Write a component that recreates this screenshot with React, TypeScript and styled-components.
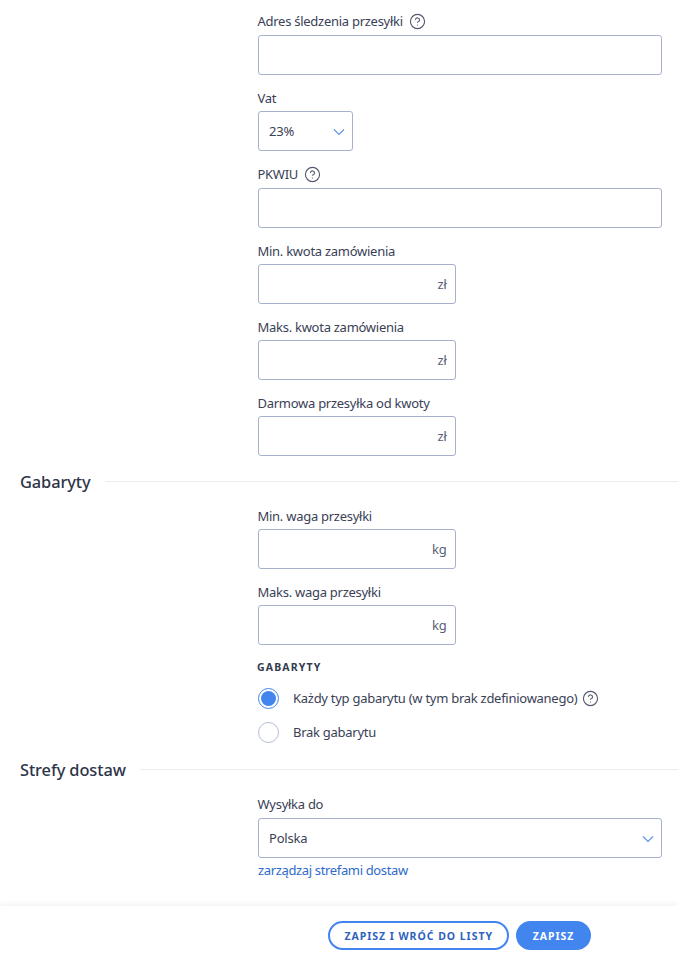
import React from 'react';
import styled, { createGlobalStyle } from 'styled-components';
import { CircleHelp } from 'lucide-react';

const GlobalStyle = createGlobalStyle`
  html, body {
    margin: 0;
    padding: 0;
    background: #ffffff;
    font-family: "Noto Sans", "Open Sans", sans-serif;
    color: #323a4f;
  }
  * {
    box-sizing: border-box;
  }
`;

const Page = styled.div`
  width: 678px;
  height: 961px;
  display: flex;
  flex-direction: column;
  overflow: hidden;
`;

const Content = styled.div`
  flex: 1;
  padding-top: 10px;
`;

const FormColumn = styled.div`
  margin-left: 258px;
  width: 404px;
`;

const Field = styled.div`
  margin-bottom: 12px;
`;

const Label = styled.label<{ $tall?: boolean }>`
  display: flex;
  align-items: center;
  gap: 6px;
  height: ${({ $tall }) => ($tall ? '25px' : '24px')};
  padding-bottom: ${({ $tall }) => ($tall ? '3px' : '2px')};
  margin-left: -0.5px;
  font-size: 13px;
  letter-spacing: -0.27px;
  color: #3a4156;
`;

const HelpIcon = styled(CircleHelp)`
  width: 17px;
  height: 17px;
  color: #56586f;
  flex-shrink: 0;
`;

const InputBox = styled.div<{ $width: number }>`
  position: relative;
  width: ${({ $width }) => $width}px;
  height: 40px;
`;

const TextInput = styled.input`
  display: block;
  width: 100%;
  height: 100%;
  padding: 0 40px 0 10px;
  border: 1px solid #a6b1cc;
  border-radius: 3px;
  background: #ffffff;
  outline: none;
  font: inherit;
`;

const Unit = styled.span`
  position: absolute;
  right: 9.5px;
  top: 11px;
  font-size: 13px;
  letter-spacing: -0.27px;
  color: #5a6075;
`;

const SelectControl = styled.select`
  display: block;
  width: 100%;
  height: 100%;
  padding: 0 30px 0 10px;
  border: 1px solid #a6b1cc;
  border-radius: 3px;
  background: #ffffff;
  appearance: none;
  outline: none;
  font-family: inherit;
  font-size: 13px;
  letter-spacing: -0.2px;
  color: #3a4156;
`;

const Chevron = styled.svg`
  position: absolute;
  right: 8px;
  top: 17px;
  width: 12px;
  height: 8px;
  fill: none;
  stroke: #5b93ea;
  stroke-width: 1.1;
  pointer-events: none;
`;

const SectionHeader = styled.div<{ $top: number; $bottom: number }>`
  display: flex;
  align-items: center;
  gap: 14px;
  height: 28px;
  margin-top: ${({ $top }) => $top}px;
  margin-bottom: ${({ $bottom }) => $bottom}px;
  padding-left: 20px;
`;

const SectionTitle = styled.h2`
  margin: 0;
  padding-bottom: 2px;
  font-size: 16.4px;
  font-weight: 500;
  letter-spacing: -0.1px;
  color: #2d3448;
  white-space: nowrap;
`;

const SectionLine = styled.div`
  flex: 1;
  height: 1px;
  margin-top: -2px;
  background: #ececec;
`;

const GroupTitle = styled.div`
  height: 18px;
  margin-bottom: 6px;
  margin-left: -1px;
  font-size: 10.5px;
  line-height: 20px;
  font-weight: 700;
  letter-spacing: 1.15px;
  color: #333a4e;
`;

const RadioRow = styled.label`
  display: flex;
  align-items: center;
  height: 34px;
  font-size: 13px;
  letter-spacing: -0.27px;
  color: #3a4156;
`;

const RadioMark = styled.span<{ $checked?: boolean }>`
  display: flex;
  align-items: center;
  justify-content: center;
  width: 21px;
  height: 21px;
  margin-right: 14px;
  border-radius: 50%;
  border: 1px solid ${({ $checked }) => ($checked ? '#4285ee' : '#b4bcd4')};
  &::after {
    content: '';
    display: ${({ $checked }) => ($checked ? 'block' : 'none')};
    width: 15px;
    height: 15px;
    border-radius: 50%;
    background: #4285ee;
  }
`;

const RadioHelp = styled(HelpIcon)`
  margin-left: 5px;
`;

const ManageLink = styled.a`
  display: block;
  margin-top: 3px;
  font-size: 13px;
  line-height: 18px;
  letter-spacing: -0.35px;
  color: #2f6bc9;
  text-decoration: none;
`;

const Footer = styled.div`
  flex-shrink: 0;
  height: 55px;
  display: flex;
  justify-content: flex-end;
  align-items: flex-start;
  gap: 7px;
  padding: 15px 87px 0 0;
  background: #ffffff;
  box-shadow: 0 -2px 5px rgba(0, 0, 0, 0.06);
`;

const Button = styled.button<{ $primary?: boolean }>`
  height: 29px;
  min-width: 75px;
  padding: 0 14px;
  border: 2px solid #4285ee;
  border-radius: 15px;
  background: ${({ $primary }) => ($primary ? '#4285ee' : '#ffffff')};
  color: ${({ $primary }) => ($primary ? '#ffffff' : '#2f62bd')};
  font-family: inherit;
  font-size: 10.5px;
  font-weight: 700;
  letter-spacing: 0.97px;
  white-space: nowrap;
`;

const ChevronIcon = () => (
  <Chevron viewBox="0 0 12 8">
    <path d="M1 1.5 L6 6.5 L11 1.5" />
  </Chevron>
);

type TextFieldProps = {
  label: string,
  help?: boolean,
  unit?: string,
  width?: number
};

const TextField = ({
  label, help, unit, width = 404
}: TextFieldProps) => (
  <Field>
    <Label $tall={help}>
      {label}
      {help && <HelpIcon strokeWidth={1.6} />}
    </Label>
    <InputBox $width={width}>
      <TextInput type="text" />
      {unit && <Unit>{unit}</Unit>}
    </InputBox>
  </Field>
);

type SelectFieldProps = {
  label: string,
  value: string,
  width: number
};

const SelectField = ({ label, value, width }: SelectFieldProps) => (
  <Field>
    <Label>{label}</Label>
    <InputBox $width={width}>
      <SelectControl defaultValue={value}>
        <option>{value}</option>
      </SelectControl>
      <ChevronIcon />
    </InputBox>
  </Field>
);

export default function App() {
  return (
    <Page>
      <GlobalStyle />
      <Content>
        <FormColumn>
          <TextField label="Adres śledzenia przesyłki" help />
          <SelectField label="Vat" value="23%" width={95} />
          <TextField label="PKWIU" help />
          <TextField label="Min. kwota zamówienia" unit="zł" width={198} />
          <TextField label="Maks. kwota zamówienia" unit="zł" width={198} />
          <TextField label="Darmowa przesyłka od kwoty" unit="zł" width={198} />
        </FormColumn>

        <SectionHeader $top={0} $bottom={9}>
          <SectionTitle>Gabaryty</SectionTitle>
          <SectionLine />
        </SectionHeader>

        <FormColumn>
          <TextField label="Min. waga przesyłki" unit="kg" width={198} />
          <TextField label="Maks. waga przesyłki" unit="kg" width={198} />
          <GroupTitle>GABARYTY</GroupTitle>
          <RadioRow>
            <RadioMark $checked />
            Każdy typ gabarytu (w tym brak zdefiniowanego)
            <RadioHelp strokeWidth={1.6} />
          </RadioRow>
          <RadioRow>
            <RadioMark />
            Brak gabarytu
          </RadioRow>
        </FormColumn>

        <SectionHeader $top={7} $bottom={9}>
          <SectionTitle>Strefy dostaw</SectionTitle>
          <SectionLine />
        </SectionHeader>

        <FormColumn>
          <Label $tall>Wysyłka do</Label>
          <InputBox $width={404}>
            <SelectControl defaultValue="Polska">
              <option>Polska</option>
            </SelectControl>
            <ChevronIcon />
          </InputBox>
          <ManageLink href="#">zarządzaj strefami dostaw</ManageLink>
        </FormColumn>
      </Content>
      <Footer>
        <Button type="button">ZAPISZ I WRÓĆ DO LISTY</Button>
        <Button type="button" $primary>ZAPISZ</Button>
      </Footer>
    </Page>
  );
}
